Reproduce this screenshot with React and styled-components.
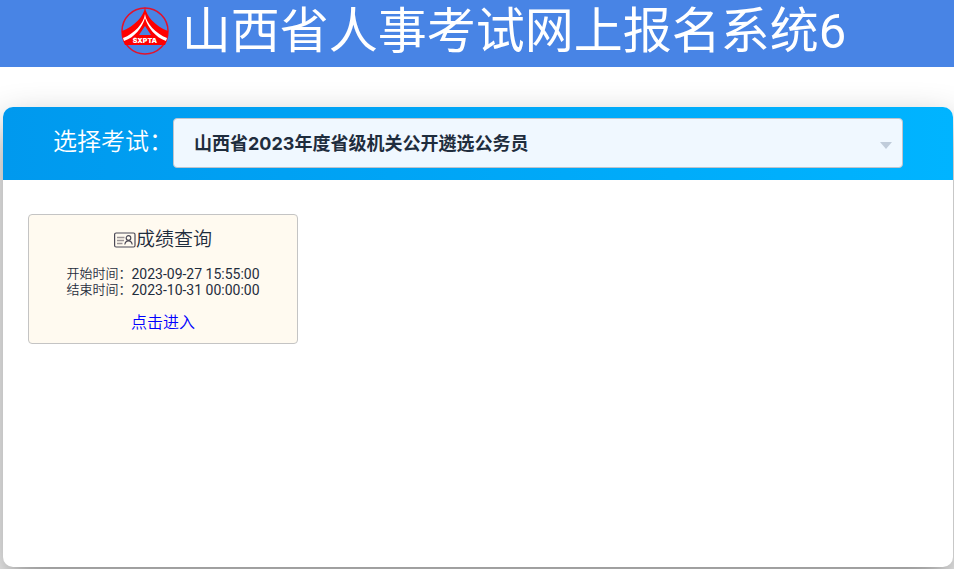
import React from "react";
import styled, { createGlobalStyle } from "styled-components";

const GlobalStyle = createGlobalStyle`
  *, *::before, *::after { box-sizing: border-box; }
  body {
    margin: 0;
    background: #fff;
    color: #1f2d3d;
    font-family: Roboto, "Noto Sans CJK SC", sans-serif;
  }
`;

const Page = styled.div`
  display: flex;
  flex-direction: column;
  min-height: 100vh;
  overflow: hidden;
`;

const Banner = styled.header`
  display: flex;
  align-items: center;
  justify-content: center;
  gap: 12px;
  height: 67px;
  padding: 0 0 6px 12px;
  background: #4884e5;
`;

const SiteTitle = styled.h1`
  margin: 0;
  padding-top: 2px;
  color: #fff;
  font-size: 49px;
  font-weight: 400;
  line-height: 56px;
  white-space: nowrap;
`;

const Panel = styled.main`
  display: flex;
  flex-direction: column;
  flex: 1;
  margin: 40px 1px 2px 3px;
  border-radius: 10px;
  background: #fff;
  box-shadow: 0 20px 40px rgba(0, 0, 0, 0.45);
`;

const ExamBar = styled.div`
  display: flex;
  align-items: center;
  height: 73px;
  padding: 0 50px 2px;
  border-radius: 10px 10px 0 0;
  background: linear-gradient(90deg, #0099ee, #00b4ff);
`;

const ExamLabel = styled.label`
  flex: none;
  width: 120px;
  padding-bottom: 2px;
  color: #fff;
  font-size: 24px;
  font-weight: 350;
  line-height: 36px;
  white-space: nowrap;
`;

const SelectBox = styled.div`
  position: relative;
  flex: 1;
  min-width: 0;
`;

const ExamSelect = styled.select`
  display: block;
  width: 100%;
  height: 50px;
  padding: 2px 40px 0 20px;
  border: 1px solid #c0c4cc;
  border-radius: 4px;
  appearance: none;
  background: #f0f8ff;
  color: #1f2d3d;
  font-family: Inter, "Noto Sans CJK SC", sans-serif;
  font-size: 18px;
  font-weight: 700;
`;

const Caret = styled.svg`
  position: absolute;
  top: 24px;
  right: 11px;
  width: 12px;
  height: 7px;
  fill: #c0ccda;
  pointer-events: none;
`;

const Services = styled.section`
  display: flex;
  flex-wrap: wrap;
  gap: 24px;
  padding: 34px 25px;
`;

const ServiceCard = styled.article`
  display: flex;
  flex-direction: column;
  align-items: center;
  width: 270px;
  height: 130px;
  padding-top: 11px;
  border: 1px solid #c4c4c4;
  border-radius: 4px;
  background: #fffaf0;
`;

const ServiceTitle = styled.h2`
  display: flex;
  align-items: center;
  margin: 0 0 12px;
  font-size: 19px;
  font-weight: 350;
  line-height: 28px;
`;

const Times = styled.div`
  line-height: 16px;
  white-space: nowrap;
`;

const TimeRow = styled.div`
  display: flex;
  height: 16px;
`;

const TimeLabel = styled.span`
  width: 65px;
  font-size: 13px;
  font-weight: 350;
`;

const TimeValue = styled.time`
  font-size: 14px;
`;

const EnterLink = styled.a`
  margin-top: 13px;
  color: #0000ff;
  font-size: 16px;
  font-weight: 350;
  line-height: 24px;
  text-decoration: none;
`;

function Logo() {
  return (
    <svg width="50" height="50" viewBox="0 0 50 50" role="img" aria-label="SXPTA">
      <circle cx="25" cy="25" r="23" fill="none" stroke="#e3122b" strokeWidth="1.6" />
      <path d="M25 1 C26 10 35 20 48 25 Q48 33 45 39 L5 39 Q2 33 2 25 C15 20 24 10 25 1Z" fill="#f00" />
      <path d="M25 8 C24 17 14 28 3 32 L4 35 C15 31 22 22 25 12 C28 22 35 31 46 35 L47 32 C36 28 26 17 25 8Z" fill="#fff" />
      <path d="M25 20 L31 29 H19Z" fill="#4884e5" />
      <text x="25" y="37" textAnchor="middle" textRendering="geometricPrecision" fill="#fff" fontFamily="Inter, sans-serif" fontSize="7" fontWeight="900">SXPTA</text>
    </svg>
  );
}

function IdCardIcon() {
  return (
    <svg width="22" height="18" viewBox="0 0 22 18" fill="none" stroke="#4b4856" strokeWidth="1.2" aria-hidden="true">
      <rect x="0.6" y="2" width="20.4" height="14" rx="1.5" />
      <path d="M3 6.5 H10.5 M3 9.5 H10 M3 12.5 H8.5" stroke="#9a9395" strokeWidth="1.5" />
      <circle cx="14.5" cy="7" r="2.3" />
      <path d="M10.8 13.5 Q11.5 9.8 14.5 9.8 Q17.5 9.8 18.2 13.5" />
    </svg>
  );
}

const times = [
  { label: "开始时间：", value: "2023-09-27 15:55:00" },
  { label: "结束时间：", value: "2023-10-31 00:00:00" },
];

export default function App() {
  return (
    <Page>
      <GlobalStyle />
      <Banner>
        <Logo />
        <SiteTitle>山西省人事考试网上报名系统6</SiteTitle>
      </Banner>
      <Panel>
        <ExamBar>
          <ExamLabel htmlFor="exam">选择考试：</ExamLabel>
          <SelectBox>
            <ExamSelect id="exam" defaultValue="2023">
              <option value="2023">山西省2023年度省级机关公开遴选公务员</option>
            </ExamSelect>
            <Caret viewBox="0 0 12 7" aria-hidden="true">
              <path d="M0 0 H12 L6 7Z" />
            </Caret>
          </SelectBox>
        </ExamBar>
        <Services>
          <ServiceCard>
            <ServiceTitle>
              <IdCardIcon />
              成绩查询
            </ServiceTitle>
            <Times>
              {times.map((time) => (
                <TimeRow key={time.label}>
                  <TimeLabel>{time.label}</TimeLabel>
                  <TimeValue>{time.value}</TimeValue>
                </TimeRow>
              ))}
            </Times>
            <EnterLink href="#enter">点击进入</EnterLink>
          </ServiceCard>
        </Services>
      </Panel>
    </Page>
  );
}
